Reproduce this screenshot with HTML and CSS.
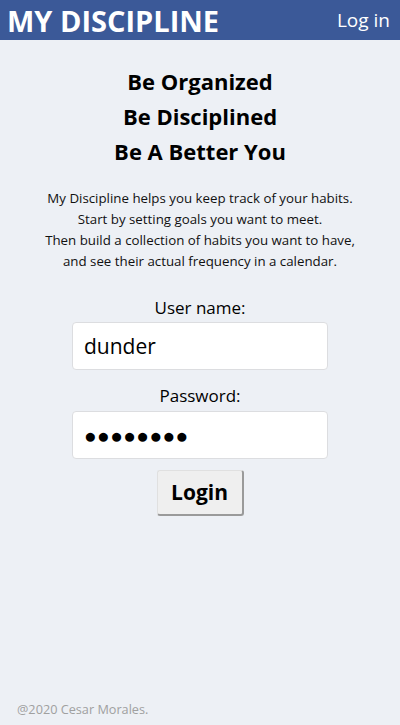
FILE: index.html
```html
<!DOCTYPE html>
<html>
<head>
<meta charset="utf-8">
<link rel="stylesheet" href="styles.css">
</head>
<body>
<div class="page">
  <header class="topbar">
    <div class="brand">MY DISCIPLINE</div>
    <div class="nav-link">Log in</div>
  </header>
  <main class="content">
    <h1 class="slogan">Be Organized<br>Be Disciplined<br>Be A Better You</h1>
    <p class="intro">My Discipline helps you keep track of your habits.<br>Start by setting goals you want to meet.<br>Then build a collection of habits you want to have,<br>and see their actual frequency in a calendar.</p>
    <form class="login-form">
      <label class="field-label">User name:</label>
      <div class="field-box">dunder</div>
      <label class="field-label">Password:</label>
      <div class="field-box pw">●●●●●●●●</div>
      <div class="btn">Login</div>
    </form>
  </main>
  <footer class="footer">@2020 Cesar Morales.</footer>
</div>
</body>
</html>
```

FILE: styles.css
```css
* { box-sizing: border-box; }
html, body { margin: 0; padding: 0; }
body {
  background: #edf0f5;
  font-family: "Open Sans", "Noto Sans", sans-serif;
  color: #000;
}
.page {
  height: 725px;
  display: flex;
  flex-direction: column;
}
.topbar {
  height: 40px;
  background: #3b5998;
  color: #fff;
  display: flex;
  align-items: center;
  justify-content: space-between;
  padding: 0 10px 0 7px;
}
.brand {
  font-weight: 700;
  font-size: 29px;
  letter-spacing: 0px;
}
.nav-link {
  font-size: 19px;
}
.content {
  flex: 1;
  display: flex;
  flex-direction: column;
  align-items: center;
}
.slogan {
  margin: 24px 0 0;
  font-size: 22px;
  line-height: 35px;
  font-weight: 700;
  text-align: center;
}
.intro {
  margin: 19px 0 0;
  font-size: 13.3px;
  line-height: 21px;
  text-align: center;
  color: #111;
}
.login-form {
  margin-top: 24px;
  display: flex;
  flex-direction: column;
  align-items: center;
}
.field-label {
  font-size: 17px;
  line-height: 24px;
}
.field-box {
  margin-top: 2px;
  margin-bottom: 14px;
  width: 256px;
  height: 48px;
  background: #fff;
  border: 1px solid #dcdde0;
  border-radius: 4px;
  font-size: 21px;
  line-height: 46px;
  padding-left: 11px;
}
.field-box.pw {
  margin-top: 3px;
  font-size: 21px;
  letter-spacing: 0.4px;
  margin-bottom: 11px;
}
.btn {
  width: 87px;
  height: 46px;
  background: #efefef;
  border: 1px solid #e0e0e0;
  border-right: 2px solid #9a9a9a;
  border-bottom: 2px solid #9a9a9a;
  border-radius: 3px;
  font-weight: 700;
  font-size: 21px;
  line-height: 42px;
  text-align: center;
}
.footer {
  padding: 0 0 7px 17px;
  font-size: 12.7px;
  color: #a0a0a0;
}
```
